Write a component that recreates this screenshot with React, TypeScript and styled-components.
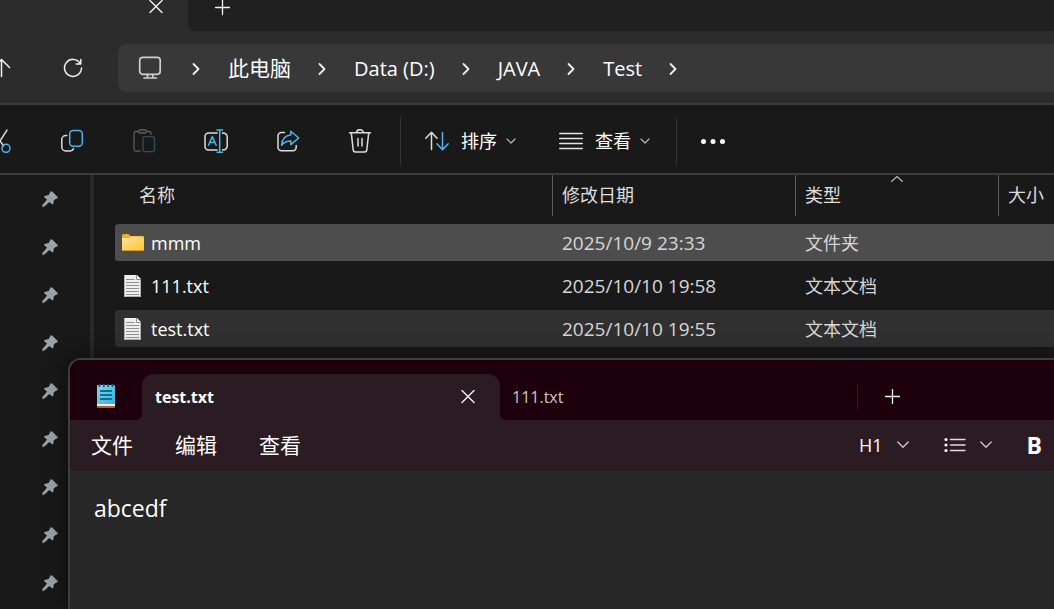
import React from "react";
import styled, { createGlobalStyle } from "styled-components";

const GlobalStyle = createGlobalStyle`
  *, *::before, *::after { box-sizing: border-box; }
  html, body, #root { height: 100%; }
  body {
    margin: 0;
    overflow: hidden;
    background: #191919;
    color: #ffffff;
    font-family: "Open Sans", "Noto Sans", "Noto Sans CJK SC", sans-serif;
  }
  button {
    font: inherit;
    color: inherit;
    background: none;
    border: 0;
    padding: 0;
    margin: 0;
    white-space: nowrap;
  }
  svg { display: block; flex: none; }
`;

const Desktop = styled.div`
  position: relative;
  display: flex;
  flex-direction: column;
  height: 100%;
  overflow: hidden;
`;

/* ---------- file explorer ---------- */

const TabStrip = styled.div`
  display: flex;
  flex: none;
  height: 31px;
  background: #2c2c2c;
`;

const ExplorerTab = styled.div`
  display: flex;
  justify-content: flex-end;
  align-items: flex-start;
  width: 188px;
  padding-right: 25px;
`;

const StripRest = styled.div`
  display: flex;
  align-items: flex-start;
  flex: 1;
  padding-left: 26px;
  background: #202020;
  border-bottom-left-radius: 7px;
`;

const AddressRow = styled.div`
  display: flex;
  flex: none;
  align-items: center;
  height: 74px;
  padding-top: 2px;
  background: #2c2c2c;
  border-bottom: 2px solid #3b3b3b;
`;

const NavButtons = styled.nav`
  display: flex;
  flex: none;
  margin: 0 9px 0 -35px;
`;

const NavButton = styled.button`
  display: flex;
  justify-content: center;
  width: 72px;
  flex: none;
`;

const AddressBar = styled.div`
  display: flex;
  align-items: center;
  flex: 1;
  gap: 26px;
  height: 48px;
  padding: 1px 19px 0;
  border-radius: 8px 0 0 8px;
  background: #383838;
  line-height: 29px;
`;

const Crumb = styled.button<{ $size: number }>`
  font-size: ${(p) => p.$size}px;
`;

const CommandBar = styled.div`
  display: flex;
  flex: none;
  align-items: center;
  height: 70px;
  padding-top: 4px;
  border-bottom: 2px solid #3b3b3b;
  background: #191919;
  overflow: hidden;
`;

const IconButtons = styled.div`
  display: flex;
  flex: none;
  margin-left: -36px;
`;

const IconButton = styled.button`
  display: flex;
  justify-content: center;
  width: 72px;
`;

const Separator = styled.div`
  flex: none;
  width: 1px;
  height: 48px;
  margin-left: 4px;
  background: #353535;
`;

const Commands = styled.div`
  display: flex;
  align-items: center;
  gap: 43px;
  padding: 0 22px 0 24px;
`;

const Command = styled.button`
  display: flex;
  align-items: center;
  font-size: 18px;
  line-height: 24px;
`;

const CommandLabel = styled.span`
  margin: 0 9px 0 12px;
`;

const MoreButton = styled.button`
  margin-left: 24px;
`;

const Body = styled.div`
  display: flex;
  flex: 1;
  min-height: 0;
`;

const Sidebar = styled.aside`
  flex: none;
  width: 94px;
  overflow: hidden;
  border-right: 4px solid #292929;
`;

const PinRow = styled.button`
  display: flex;
  align-items: center;
  justify-content: flex-end;
  width: 58px;
  height: 48px;
`;

const Files = styled.main`
  flex: 1;
  min-width: 0;
  padding-left: 21px;
`;

const FileTable = styled.table`
  width: 100%;
  table-layout: fixed;
  border-spacing: 0;
`;

const Col = styled.col<{ $w?: number }>`
  width: ${(p) => (p.$w ? `${p.$w}px` : "auto")};
`;

const HeadCell = styled.th`
  height: 46px;
  padding: 0;
  vertical-align: top;
  text-align: left;
  font-weight: 400;
  font-size: 18px;
  color: #dedede;
`;

const HeadLabel = styled.div<{ $first?: boolean }>`
  position: relative;
  height: 41px;
  padding-left: ${(p) => (p.$first ? 24 : 9)}px;
  border-left: ${(p) => (p.$first ? 0 : 1)}px solid #5c5c5c;
  line-height: 41px;
  white-space: nowrap;
`;

const SortMark = styled.span`
  position: absolute;
  top: 0;
  left: 50%;
  margin-left: -7px;
`;

const FileRow = styled.tr<{ $tone: string }>`
  td {
    background-color: ${(p) => p.$tone};
  }
`;

const Cell = styled.td<{ $size: number; $dim?: boolean }>`
  height: 43px;
  padding: 0 0 0 10px;
  border: 0 solid transparent;
  border-width: 3px 0;
  background-clip: padding-box;
  font-size: ${(p) => p.$size}px;
  line-height: 24px;
  color: ${(p) => (p.$dim ? "#d6d6d6" : "#ffffff")};
  white-space: nowrap;
  &:first-child {
    padding-left: 5px;
    border-radius: 5px 0 0 5px;
  }
`;

const FileName = styled.div`
  display: flex;
  align-items: center;
  gap: 6px;
`;

/* ---------- notepad window ---------- */

const Notepad = styled.section`
  position: absolute;
  left: 68px;
  top: 358px;
  right: 0;
  bottom: 0;
  display: flex;
  flex-direction: column;
  overflow: hidden;
  border: 2px solid #3f3d3e;
  border-width: 2px 0 0 2px;
  border-top-left-radius: 13px;
  background: #272727;
  box-shadow: 0 0 22px rgba(0, 0, 0, 0.55);
`;

const NoteTabs = styled.div`
  display: flex;
  flex: none;
  height: 60px;
  background: #2b1b22;
`;

const AppCell = styled.div`
  flex: none;
  width: 72px;
  padding: 23px 0 0 26px;
  background: #1e000d;
  border-bottom-right-radius: 6px;
`;

const ActiveSlot = styled.div`
  flex: none;
  width: 358px;
  padding-top: 14px;
  background: linear-gradient(#1e000d 40px, transparent 40px);
`;

const ActiveTab = styled.div`
  display: flex;
  align-items: center;
  justify-content: space-between;
  height: 46px;
  padding: 0 25px 0 13px;
  border-radius: 12px 12px 0 0;
  background: #2b1b22;
  font-size: 16px;
  font-weight: 700;
`;

const IdleTabs = styled.div`
  display: flex;
  flex: 1;
  align-items: center;
  padding-top: 14px;
  background: #1e000d;
  border-bottom-left-radius: 6px;
`;

const IdleTab = styled.button`
  width: 358px;
  height: 24px;
  padding-left: 12px;
  border-right: 1px solid #351a25;
  text-align: left;
  font-size: 16px;
  line-height: 24px;
  color: #d0c4c9;
`;

const NewTab = styled.button`
  margin-left: 26px;
`;

const MenuBar = styled.div`
  display: flex;
  flex: none;
  align-items: center;
  height: 50px;
  padding: 0 12px 0 21px;
  background: #2b1b22;
  border-bottom: 1px solid #241a1e;
`;

const Menus = styled.div`
  display: flex;
  gap: 42px;
  font-size: 21px;
  line-height: 28px;
`;

const FormatTools = styled.div`
  display: flex;
  align-items: center;
  gap: 35px;
  margin-left: auto;
`;

const FormatButton = styled.button`
  display: flex;
  align-items: center;
  gap: 14px;
  font-size: 18px;
  line-height: 24px;
`;

const BoldButton = styled.button`
  font-family: "Open Sans", sans-serif;
  font-size: 23px;
  font-weight: 700;
  line-height: 24px;
`;

const Editor = styled.textarea`
  flex: 1;
  min-height: 0;
  padding: 22px 24px;
  border: 0;
  outline: 0;
  resize: none;
  background: #272727;
  color: #ffffff;
  font-family: "Open Sans", "Noto Sans CJK SC", sans-serif;
  font-size: 23px;
  line-height: 32px;
`;

/* ---------- icons ---------- */

const light = "#dcdcdc";
const blue = "#4cb5ea";

const Svg = ({
  w = 24,
  h = 24,
  stroke = light,
  sw = 1.5,
  children,
}: {
  w?: number;
  h?: number;
  stroke?: string;
  sw?: number;
  children: React.ReactNode;
}) => (
  <svg
    width={w}
    height={h}
    viewBox={`0 0 ${w} ${h}`}
    fill="none"
    stroke={stroke}
    strokeWidth={sw}
    strokeLinecap="round"
    strokeLinejoin="round"
    aria-hidden="true"
  >
    {children}
  </svg>
);

const CloseIcon = () => (
  <Svg w={14} h={14} stroke="#f2f2f2" sw={1.4}>
    <path d="M1 .5 13 12.5M13 .5 1 12.5" />
  </Svg>
);
const PlusIcon = () => (
  <Svg w={16} h={16} stroke="#f2f2f2" sw={1.3}>
    <path d="M8.500 .5V14.500M1.500 7.500H15.500" />
  </Svg>
);
const CrumbChevron = () => (
  <Svg w={11} h={14} stroke="#f0f0f0" sw={1.8}>
    <path d="M2.500 2 7.500 7 2.500 12" />
  </Svg>
);
const SmallChevron = () => (
  <Svg w={10} h={8} stroke="#b5b5b5" sw={1.2}>
    <path d="M1 2 5 6 9 2" />
  </Svg>
);
const FormatChevron = () => (
  <Svg w={12} h={10} stroke="#cfc6ca" sw={1.3}>
    <path d="M.8 2 6 7.3 11.2 2" />
  </Svg>
);
const UpIcon = () => (
  <Svg stroke="#f0f0f0">
    <path d="M12.500 20.500V4M4 12 12.500 3.500 20.500 11.500" />
  </Svg>
);
const RefreshIcon = () => (
  <Svg stroke="#f0f0f0">
    <path d="M19.3 7.500A8.5 8.5 0 1 0 20.5 12M19.8 3.500V8H15.2" />
  </Svg>
);
const MonitorIcon = () => (
  <Svg w={28} h={28} stroke="#cfcfcf" sw={1.7}>
    <rect x="2.700" y="2.300" width="20.500" height="17" rx="3" />
    <path d="M7 23H19.500M10.500 19.500V22.800M15.800 19.500V22.800" />
  </Svg>
);
const CutIcon = () => (
  <Svg>
    <path d="M19 1.2 8.6 17M5 1.2 15.5 17" />
    <circle cx="18" cy="19.3" r="4" stroke={blue} />
    <circle cx="6" cy="19.3" r="4" stroke={blue} />
  </Svg>
);
const CopyIcon = () => (
  <Svg>
    <path d="M6.8 6.6H5.8a4 4 0 0 0-4 4V18a4 4 0 0 0 4 4H10a4 4 0 0 0 3.6-2.4" />
    <rect x="9.7" y="1.6" width="12.6" height="15.6" rx="3.4" stroke={blue} />
  </Svg>
);
const PasteIcon = () => (
  <Svg stroke="#5e5e5e" sw={1.3}>
    <path d="M8 22.2H4a2 2 0 0 1-2-2V4.500A2 2 0 0 1 4 2.500H6M15 2.500H17A2 2 0 0 1 19 4.500V5.500" />
    <rect x="6.500" y="1" width="8" height="3" rx="1.500" />
    <rect x="11" y="7.600" width="11.500" height="15" rx="1.800" stroke="#2a5064" />
  </Svg>
);
const RenameIcon = () => (
  <Svg>
    <path d="M13 21H4.500A3.500 3.500 0 0 1 1 17.500V7.500A3.500 3.500 0 0 1 4.500 4H13M18.500 4.200A3.800 3.800 0 0 1 23.200 7.800V17.200A3.800 3.800 0 0 1 18.500 20.800" />
    <path d="M15.700 1V23.200M13 .9H18.500M13 23.200H18.500M4.500 16.300 8.300 7.600 12.200 16.300M5.700 13.500H11" stroke={blue} />
  </Svg>
);
const ShareIcon = () => (
  <Svg>
    <path d="M8.500 3.600H5.500A3.500 3.500 0 0 0 2 7.100V18.200A3.500 3.500 0 0 0 5.500 21.700H16.700A3.500 3.500 0 0 0 20.200 18.200V16.500" />
    <path d="M14.800 2.300 22.700 9 14.800 15.600V12C10.500 12 7.700 13.300 5.600 16.300 6 10.300 9.200 6.200 14.800 5.900Z" stroke={blue} />
  </Svg>
);
const TrashIcon = () => (
  <Svg>
    <path d="M1.500 3.800H22.500M8.700 3.500A3.300 2.800 0 0 1 15.300 3.500M3.300 4.200 5.200 20.800A2.300 2.300 0 0 0 7.400 23H16.600A2.300 2.300 0 0 0 18.800 20.800L20.700 4.200M10 9.500V17M14 9.500V17" />
  </Svg>
);
const SortIcon = () => (
  <Svg>
    <path d="M6.500 20.500V3.500M.8 9.300 6.500 3.300 12 9.300" />
    <path d="M17.500 3.500V20.500M11.900 14.700 17.500 20.700 23.200 14.700" stroke={blue} />
  </Svg>
);
const LinesIcon = () => (
  <Svg stroke="#e6e6e6">
    <path d="M.7 4.500H23.300M.7 9.500H23.300M.7 14.500H23.300M.7 19.500H23.300" />
  </Svg>
);
const MoreIcon = () => (
  <svg width="25" height="8" viewBox="0 0 25 8" fill="#ffffff" aria-hidden="true">
    <circle cx="2.500" cy="4.500" r="2.500" />
    <circle cx="12" cy="4.500" r="2.500" />
    <circle cx="21.500" cy="4.500" r="2.500" />
  </svg>
);
const SortCaret = () => (
  <Svg w={14} h={8} stroke="#b8b8b8" sw={1.1}>
    <path d="M1.500 6.500 7 1.500 12.500 6.500" />
  </Svg>
);
const PinIcon = () => (
  <svg width="16" height="16" viewBox="0 0 16 16" fill="#98a2a8" aria-hidden="true">
    <path d="M8.600.6Q9.500-.2 10.400.7L15.500 5.800Q16.300 6.700 15.200 7.300L12 9.100 11.200 12.800Q10.800 14.100 9.800 13.100L7.300 10.900 2.400 15.500.2 15.900.5 13.700 5 8.700 2.300 6.300Q1.500 5.300 2.700 4.900L6.600 4Z" />
  </svg>
);
const FolderIcon = () => (
  <svg width="25" height="20" viewBox="0 0 25 20" aria-hidden="true">
    <defs>
      <linearGradient id="folderFace" x1="0" y1="0" x2="1" y2="1">
        <stop offset="0" stopColor="#ffe59a" />
        <stop offset="1" stopColor="#fbc534" />
      </linearGradient>
    </defs>
    <path d="M2 2.500Q2 1 3.500 1H8.500L10.500 3H22.500Q24 3 24 4.500V8H2Z" fill="#eeb020" />
    <path d="M2 5H8.500L10.500 3.500H22.500Q24 3.500 24 5V16.500Q24 18 22.500 18H3.500Q2 18 2 16.500Z" fill="url(#folderFace)" />
    <path d="M3 17.500H23" stroke="#d9982a" />
  </svg>
);
const TextFileIcon = () => (
  <svg width="25" height="24" viewBox="0 0 25 24" aria-hidden="true">
    <path d="M4 1H17L21 5V23H4Z" fill="#efefef" />
    <path d="M4.500 1V22.500H20.500V5" stroke="#b0b0b0" fill="none" />
    <path d="M16.500 1.200V5.500H20.800" stroke="#8b8b8b" fill="#ffffff" />
    <path d="M6 5.500H14.500M6 8.500H19M6 11.500H19M6 14.500H19M6 17.500H19M6 20.500H19" stroke="#8f8f8f" />
  </svg>
);
const NotepadIcon = () => (
  <svg width="20" height="26" viewBox="0 0 20 26" aria-hidden="true">
    <defs>
      <linearGradient id="padFace" x1="0" y1="0" x2="1" y2="1">
        <stop offset="0" stopColor="#7fdcf3" />
        <stop offset="1" stopColor="#35aed4" />
      </linearGradient>
    </defs>
    <rect x="1" y="20" width="18" height="5" rx="1" fill="#b9601c" />
    <rect x="1" y="19" width="18" height="4" fill="#f3efec" />
    <rect x="1" y="2" width="18" height="19" rx="1" fill="url(#padFace)" />
    <path d="M3.500 1V4M7.800 1V4M12.200 1V4M16.500 1V4" stroke="#125a78" strokeWidth="1.700" />
    <path d="M4 8H16M4 12H16M4 16H16" stroke="#0f6f92" strokeWidth="1.800" />
  </svg>
);
const BulletsIcon = () => (
  <Svg w={22} h={16} stroke="#e3dcdf" sw={1.5}>
    <path d="M6.500 2.500H21M6.500 8H21M6.500 13.500H21" />
    <g fill="#ffffff" stroke="none">
      <circle cx="2" cy="2.500" r="1.600" />
      <circle cx="2" cy="8" r="1.600" />
      <circle cx="2" cy="13.500" r="1.600" />
    </g>
  </Svg>
);

/* ---------- data ---------- */

const crumbs = [
  { label: "此电脑", size: 21 },
  { label: "Data (D:)", size: 20 },
  { label: "JAVA", size: 20 },
  { label: "Test", size: 20 },
];

const files = [
  { name: "mmm", date: "2025/10/9 23:33", type: "文件夹", folder: true, tone: "#4d4d4d" },
  { name: "111.txt", date: "2025/10/10 19:58", type: "文本文档", folder: false, tone: "transparent" },
  { name: "test.txt", date: "2025/10/10 19:55", type: "文本文档", folder: false, tone: "#303030" },
];

const tools = [
  { label: "剪切", Icon: CutIcon },
  { label: "复制", Icon: CopyIcon },
  { label: "粘贴", Icon: PasteIcon },
  { label: "重命名", Icon: RenameIcon },
  { label: "共享", Icon: ShareIcon },
  { label: "删除", Icon: TrashIcon },
];

const pins = Array.from({ length: 9 }, (_, i) => i);

export default function App() {
  return (
    <Desktop>
      <GlobalStyle />
      <TabStrip>
        <ExplorerTab>
          <button aria-label="关闭标签页">
            <CloseIcon />
          </button>
        </ExplorerTab>
        <StripRest>
          <button aria-label="新建标签页">
            <PlusIcon />
          </button>
        </StripRest>
      </TabStrip>

      <AddressRow>
        <NavButtons>
          <NavButton aria-label="向上">
            <UpIcon />
          </NavButton>
          <NavButton aria-label="刷新">
            <RefreshIcon />
          </NavButton>
        </NavButtons>
        <AddressBar>
          <MonitorIcon />
          <CrumbChevron />
          {crumbs.map((c) => (
            <React.Fragment key={c.label}>
              <Crumb $size={c.size}>{c.label}</Crumb>
              <CrumbChevron />
            </React.Fragment>
          ))}
        </AddressBar>
      </AddressRow>

      <CommandBar>
        <IconButtons>
          {tools.map(({ label, Icon }) => (
            <IconButton key={label} aria-label={label}>
              <Icon />
            </IconButton>
          ))}
        </IconButtons>
        <Separator />
        <Commands>
          <Command>
            <SortIcon />
            <CommandLabel>排序</CommandLabel>
            <SmallChevron />
          </Command>
          <Command>
            <LinesIcon />
            <CommandLabel>查看</CommandLabel>
            <SmallChevron />
          </Command>
        </Commands>
        <Separator />
        <MoreButton aria-label="更多">
          <MoreIcon />
        </MoreButton>
      </CommandBar>

      <Body>
        <Sidebar>
          {pins.map((i) => (
            <PinRow key={i} aria-label="已固定">
              <PinIcon />
            </PinRow>
          ))}
        </Sidebar>
        <Files>
          <FileTable>
            <colgroup>
              <Col $w={437} />
              <Col $w={243} />
              <Col $w={203} />
              <Col />
            </colgroup>
            <thead>
              <tr>
                <HeadCell>
                  <HeadLabel $first>名称</HeadLabel>
                </HeadCell>
                <HeadCell>
                  <HeadLabel>修改日期</HeadLabel>
                </HeadCell>
                <HeadCell>
                  <HeadLabel>
                    类型
                    <SortMark>
                      <SortCaret />
                    </SortMark>
                  </HeadLabel>
                </HeadCell>
                <HeadCell>
                  <HeadLabel>大小</HeadLabel>
                </HeadCell>
              </tr>
            </thead>
            <tbody>
              {files.map((f) => (
                <FileRow key={f.name} $tone={f.tone}>
                  <Cell $size={18}>
                    <FileName>
                      {f.folder ? <FolderIcon /> : <TextFileIcon />}
                      {f.name}
                    </FileName>
                  </Cell>
                  <Cell $size={19} $dim>
                    {f.date}
                  </Cell>
                  <Cell $size={18} $dim>
                    {f.type}
                  </Cell>
                  <Cell $size={18} />
                </FileRow>
              ))}
            </tbody>
          </FileTable>
        </Files>
      </Body>

      <Notepad>
        <NoteTabs>
          <AppCell>
            <NotepadIcon />
          </AppCell>
          <ActiveSlot>
            <ActiveTab>
              test.txt
              <button aria-label="关闭">
                <CloseIcon />
              </button>
            </ActiveTab>
          </ActiveSlot>
          <IdleTabs>
            <IdleTab>111.txt</IdleTab>
            <NewTab aria-label="新建">
              <PlusIcon />
            </NewTab>
          </IdleTabs>
        </NoteTabs>
        <MenuBar>
          <Menus>
            <button>文件</button>
            <button>编辑</button>
            <button>查看</button>
          </Menus>
          <FormatTools>
            <FormatButton>
              H1
              <FormatChevron />
            </FormatButton>
            <FormatButton>
              <BulletsIcon />
              <FormatChevron />
            </FormatButton>
            <BoldButton>B</BoldButton>
          </FormatTools>
        </MenuBar>
        <Editor aria-label="文本编辑器" spellCheck={false} defaultValue="abcedf" />
      </Notepad>
    </Desktop>
  );
}
